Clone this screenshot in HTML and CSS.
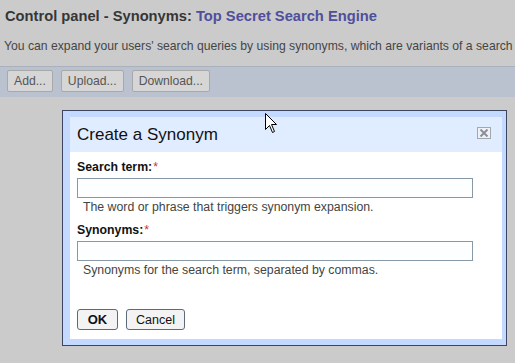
FILE: index.html
```html
<!DOCTYPE html>
<html lang="en">
<head>
  <meta charset="UTF-8" />
  <title>Control panel - Synonyms</title>
  <link rel="stylesheet" href="styles.css">
</head>
<body>
  <h1 class="title">Control panel - Synonyms: <span class="engine">Top Secret Search Engine</span></h1>
  <p class="intro">You can expand your users' search queries by using synonyms, which are variants of a search</p>
  <div class="toolbar">
    <button class="tool-btn">Add...</button>
    <button class="tool-btn">Upload...</button>
    <button class="tool-btn">Download...</button>
  </div>

  <div class="dialog">
    <div class="dialog-inner">
      <div class="dialog-head">
        <h2>Create a Synonym</h2>
        <span class="close">
          <svg width="10" height="8" viewBox="0 0 10 8"><path d="M1.5 0.5 L8.5 7.5 M8.5 0.5 L1.5 7.5" stroke="#8a8f96" stroke-width="2"/></svg>
        </span>
      </div>
      <div class="dialog-body">
        <label class="field-label">Search term:<span class="req">*</span></label>
        <input type="text" class="field">
        <div class="hint">The word or phrase that triggers synonym expansion.</div>
        <label class="field-label">Synonyms:<span class="req">*</span></label>
        <input type="text" class="field">
        <div class="hint">Synonyms for the search term, separated by commas.</div>
        <div class="actions">
          <button class="btn btn-ok">OK</button>
          <button class="btn">Cancel</button>
        </div>
      </div>
    </div>
  </div>

  <svg class="cursor" width="13" height="21" viewBox="0 0 13 21">
    <path d="M0.5 0.5 L0.5 16.5 L4.5 12.5 L7.5 19.5 L9.5 18.5 L6.5 11.5 L11.5 11.5 Z" fill="#fff" stroke="#000" stroke-width="1"/>
  </svg>
</body>
</html>
```

FILE: styles.css
```css
body {
  margin: 0;
  background: #cbcbcb;
  font-family: "Liberation Sans", Arial, sans-serif;
  color: #3c3c3c;
  overflow: hidden;
}
.title {
  font-size: 14.7px;
  font-weight: bold;
  margin: 0;
  padding: 8px 5px 0;
  color: #363636;
  white-space: nowrap;
}
.engine { color: #4f4f9c; }
.intro {
  font-size: 12.2px;
  margin: 15px 0 0 4px;
  white-space: nowrap;
  color: #454545;
}
.toolbar {
  margin-top: 13px;
  background: #bac2cf;
  border-top: 1px solid #a9b1bd;
  padding: 3px 7px 5px;
  display: flex;
  gap: 8px;
}
.tool-btn {
  font-family: inherit;
  font-size: 12.2px;
  color: #555;
  background: #d6d6d6;
  border: 1px solid #a8a8a8;
  border-radius: 2px;
  height: 22px;
  padding: 0 6px;
}
.dialog {
  position: absolute;
  left: 62px;
  top: 110px;
  width: 432px;
  height: 222px;
  border: 1px solid #3d4660;
  background: #c3d9ff;
  padding: 6px 4px 6px 7px;
}
.dialog-inner {
  background: #fff;
  height: 100%;
  display: flex;
  flex-direction: column;
}
.dialog-head {
  background: #e0ecff;
  height: 35px;
  display: flex;
  align-items: center;
  justify-content: space-between;
  padding: 0 11px 0 7px;
}
.dialog-head h2 {
  font-size: 17px;
  font-weight: normal;
  color: #111;
  margin: 0;
}
.close {
  width: 12px;
  height: 10px;
  border: 1px solid #a4a8ae;
  background: #eef2f8;
  display: flex;
  align-items: center;
  justify-content: center;
  margin-top: -4px;
}
.dialog-body {
  padding: 8px 7px;
  display: flex;
  flex-direction: column;
  align-items: flex-start;
}
.field-label {
  font-size: 12.3px;
  font-weight: bold;
  color: #111;
}
.req { color: #c33; font-weight: normal; margin-left: 1px; }
.field {
  width: 396px;
  height: 20px;
  box-sizing: border-box;
  border: 1px solid #8799a6;
  background: #fdfeff;
  margin-top: 4px;
}
.hint {
  font-size: 12.3px;
  color: #444;
  margin: 2px 0 9px 6px;
}
.actions {
  margin-top: 23px;
  display: flex;
  gap: 8px;
}
.btn {
  font-family: inherit;
  font-size: 12.5px;
  color: #111;
  background: #f3f3f3;
  border: 1px solid #5b6b7c;
  border-radius: 3px;
  height: 21px;
  padding: 0 9px;
}
.btn-ok {
  font-weight: bold;
  font-size: 13px;
  width: 41px;
  padding: 0;
}
.cursor {
  position: absolute;
  left: 265px;
  top: 113px;
}
```
